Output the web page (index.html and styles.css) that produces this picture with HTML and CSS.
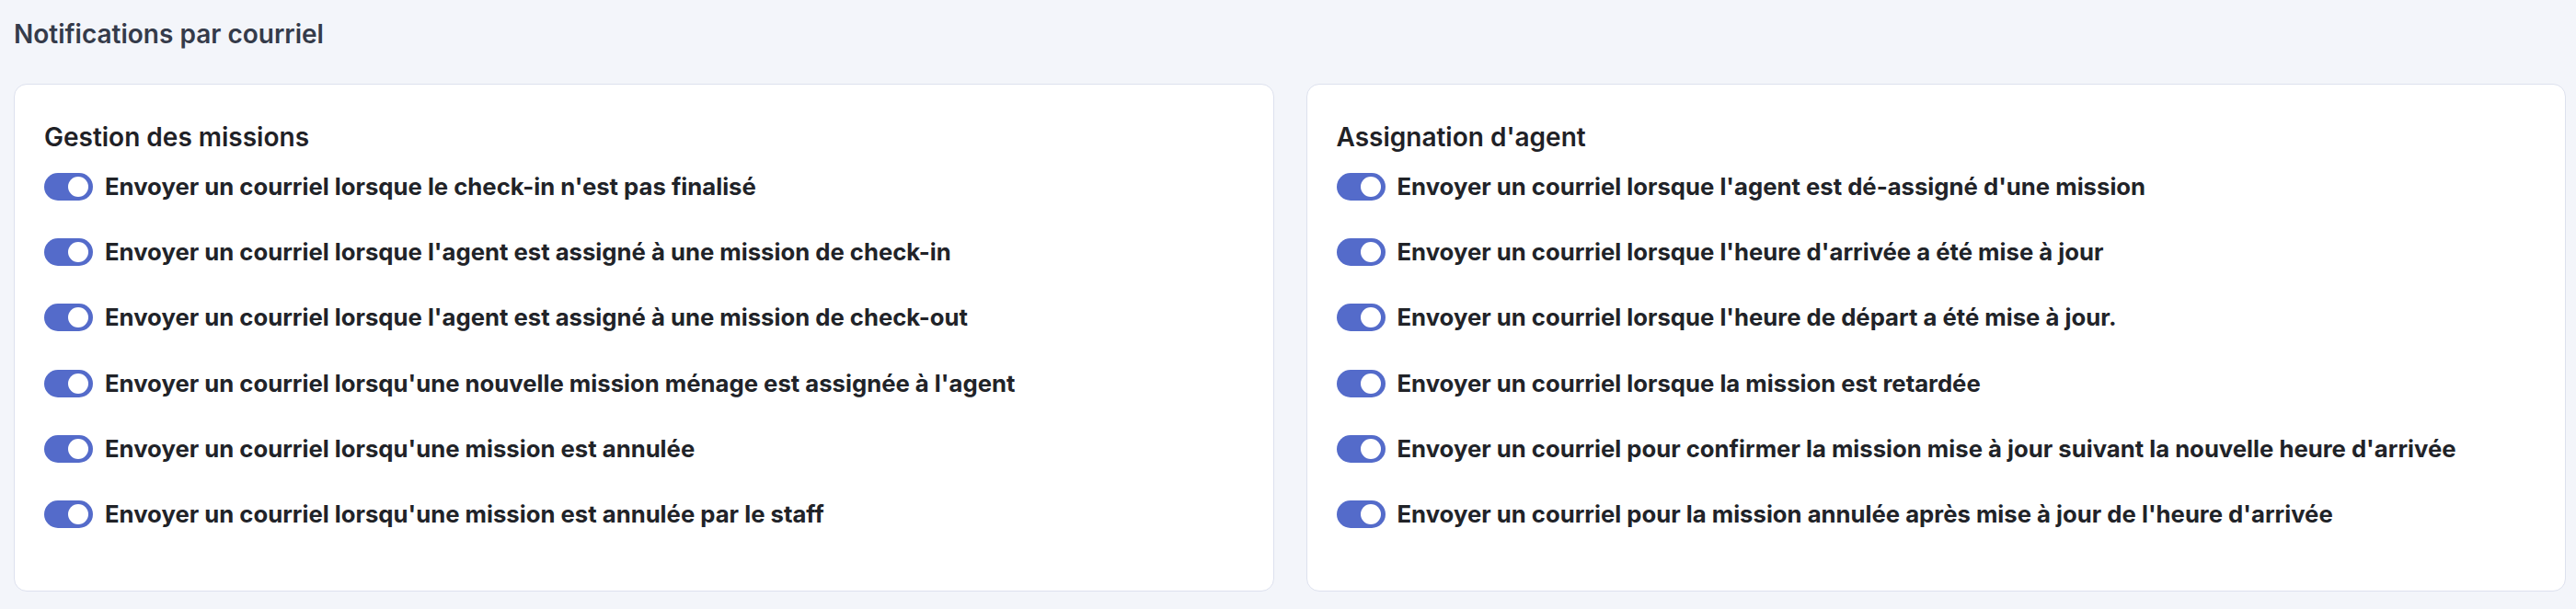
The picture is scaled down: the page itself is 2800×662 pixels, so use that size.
FILE: index.html
```html
<!DOCTYPE html>
<html lang="fr">
<head>
  <meta charset="UTF-8">
  <meta name="viewport" content="width=device-width, initial-scale=1.0">
  <title> Notifications par courriel </title>
  <link rel="stylesheet" href="styles.css">
</head>
<body>
  <div class="page">
    <h1 class="page-title">Notifications par courriel</h1>
    <div class="cards">
      <div class="card">
        <h2 class="card-title">Gestion des missions</h2>
        <ul class="options">
          <li><span class="switch"></span>Envoyer un courriel lorsque le check-in n'est pas finalisé</li>
          <li><span class="switch"></span>Envoyer un courriel lorsque l'agent est assigné à une mission de check-in</li>
          <li><span class="switch"></span>Envoyer un courriel lorsque l'agent est assigné à une mission de check-out</li>
          <li><span class="switch"></span>Envoyer un courriel lorsqu'une nouvelle mission ménage est assignée à l'agent</li>
          <li><span class="switch"></span>Envoyer un courriel lorsqu'une mission est annulée</li>
          <li><span class="switch"></span>Envoyer un courriel lorsqu'une mission est annulée par le staff</li>
        </ul>
      </div>
      <div class="card">
        <h2 class="card-title">Assignation d'agent</h2>
        <ul class="options">
          <li><span class="switch"></span>Envoyer un courriel lorsque l'agent est dé-assigné d'une mission</li>
          <li><span class="switch"></span>Envoyer un courriel lorsque l'heure d'arrivée a été mise à jour</li>
          <li><span class="switch"></span>Envoyer un courriel lorsque l'heure de départ a été mise à jour.</li>
          <li><span class="switch"></span>Envoyer un courriel lorsque la mission est retardée</li>
          <li><span class="switch"></span>Envoyer un courriel pour confirmer la mission mise à jour suivant la nouvelle heure d'arrivée</li>
          <li><span class="switch"></span>Envoyer un courriel pour la mission annulée après mise à jour de l'heure d'arrivée</li>
        </ul>
      </div>
    </div>
  </div>
</body>
</html>
```

FILE: styles.css
```css
* {
  margin: 0;
  padding: 0;
  box-sizing: border-box;
}

body {
  height: 662px;
  background-color: #f3f5fa;
  font-family: Inter, "Noto Sans", sans-serif;
}

ul {
  list-style: none;
}

.page {
  padding: 20px 11px 0 15px;
}

.page-title {
  height: 71px;
  color: #353b4a;
  font-size: 28px;
  font-weight: 600;
  line-height: 34px;
}

.cards {
  display: grid;
  grid-template-columns: 1fr 1fr;
  gap: 35px;
}

.card {
  height: 552px;
  padding: 40px 32px 0;
  background-color: #fff;
  border: 1.5px solid #dde1ee;
  border-radius: 14px;
}

.card-title {
  color: #1f2126;
  font-size: 28px;
  font-weight: 600;
  line-height: 34px;
}

.options {
  display: flex;
  flex-direction: column;
  gap: 41.2px;
  margin-top: 22px;
}

.options>li {
  display: flex;
  align-items: center;
  gap: 13px;
  color: #212328;
  font-size: 25.7px;
  font-weight: 700;
  line-height: 30px;
}

.switch {
  position: relative;
  flex: none;
  width: 53px;
  height: 30px;
  background-color: #546bca;
  border-radius: 15px;
}

.switch::after {
  content: "";
  position: absolute;
  top: 4px;
  right: 5px;
  width: 22px;
  height: 22px;
  background-color: #fff;
  border-radius: 50%;
}
```
